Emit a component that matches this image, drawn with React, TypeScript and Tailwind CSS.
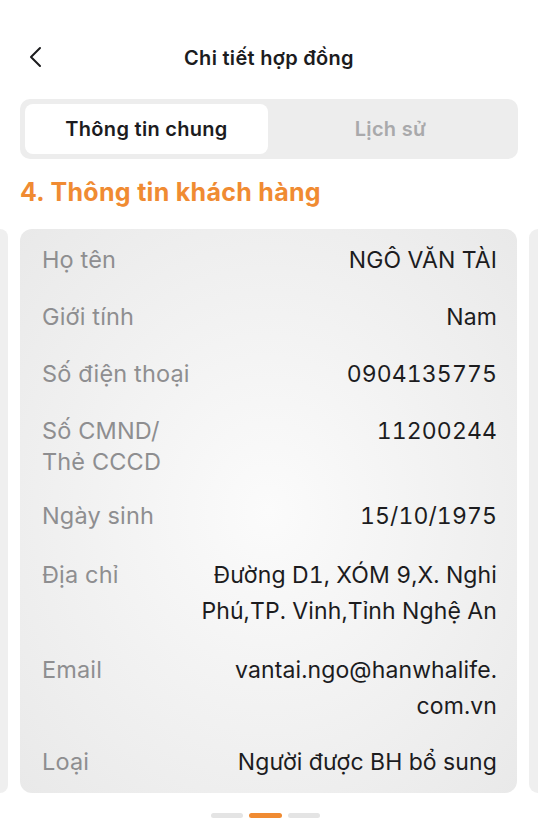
import React from "react";

const rows: { label: React.ReactNode; value: React.ReactNode; extra?: string }[] = [
  { label: "Họ tên", value: "NGÔ VĂN TÀI" },
  { label: "Giới tính", value: "Nam" },
  { label: "Số điện thoại", value: "0904135775" },
  {
    label: (
      <>
        Số CMND/
        <br />
        Thẻ CCCD
      </>
    ),
    value: "11200244",
  },
  { label: "Ngày sinh", value: "15/10/1975" },
  {
    label: "Địa chỉ",
    value: (
      <>
        Đường D1, XÓM 9,X. Nghi
        <br />
        Phú,TP. Vinh,Tỉnh Nghệ An
      </>
    ),
    extra: "mt-[2px]",
  },
  {
    label: "Email",
    value: (
      <>
        vantai.ngo@hanwhalife.
        <br />
        com.vn
      </>
    ),
    extra: "mt-[2px]",
  },
  { label: "Loại", value: "Người được BH bổ sung", extra: "-mt-[1px]" },
];

export default function App() {
  return (
    <div className="h-[838px] w-[538px] overflow-hidden bg-white font-['Inter','Noto_Sans',sans-serif] text-[#1c1c1e]">
      {/* header */}
      <div className="relative flex h-[88px] justify-center pt-[44px]">
        <svg className="absolute left-[28px] top-[46px]" width="16" height="22" viewBox="0 0 16 22" fill="none">
          <path d="M12 2L3 11l9 9" stroke="#1c1c1e" strokeWidth="2" strokeLinecap="round" strokeLinejoin="round" />
        </svg>
        <h1 className="text-[20px] font-semibold leading-[28px] tracking-[0.3px]">Chi tiết hợp đồng</h1>
      </div>

      {/* tabs */}
      <div className="mx-[20px] mt-[11px] flex h-[60px] rounded-[10px] bg-[#ededed] p-[5px]">
        <div className="flex w-[243px] items-center justify-center rounded-[8px] bg-white text-[20px] font-semibold tracking-[0.3px] text-[#1c1c1e]">
          Thông tin chung
        </div>
        <div className="flex flex-1 items-center justify-center text-[20px] font-semibold tracking-[0.3px] text-[#a9a9ab]">
          Lịch sử
        </div>
      </div>

      {/* section title */}
      <h2 className="mt-[16px] px-[20px] text-[25px] font-bold leading-[34px] tracking-[0.3px] text-[#f08b32]">
        4. Thông tin khách hàng
      </h2>

      {/* carousel */}
      <div className="mt-[20px] flex h-[564px] gap-[12px]">
        <div className="w-[8px] shrink-0 rounded-r-[12px] bg-[#efefef]" />
        <div className="flex w-[497px] shrink-0 flex-col gap-[21px] rounded-[12px] bg-[radial-gradient(ellipse_at_center,#fbfbfb_0%,#f1f1f1_55%,#e9e9e9_100%)] pb-[11px] pl-[22px] pr-[20px] pt-[13px]">
          {rows.map((r, i) => (
            <div key={i} className={`flex items-start gap-[8px] ${r.extra ?? ""}`}>
              <div className="min-w-0 flex-1 whitespace-nowrap pt-[2px] text-[23.5px] leading-[31px] tracking-[0.15px] text-[#8e8e90]">
                {r.label}
              </div>
              <div className="shrink-0 whitespace-nowrap text-right text-[23px] leading-[36px] tracking-[0.12px] tabular-nums text-[#1c1c1e]">
                {r.value}
              </div>
            </div>
          ))}
        </div>
        <div className="flex-1 rounded-l-[12px] bg-[#efefef]" />
      </div>

      {/* pager */}
      <div className="mt-[20px] flex justify-center gap-[6px] pr-[7px]">
        <div className="h-[5px] w-[32px] rounded-full bg-[#e4e4e4]" />
        <div className="h-[5px] w-[33px] rounded-full bg-[#f08b32]" />
        <div className="h-[5px] w-[32px] rounded-full bg-[#e4e4e4]" />
      </div>
    </div>
  );
}
